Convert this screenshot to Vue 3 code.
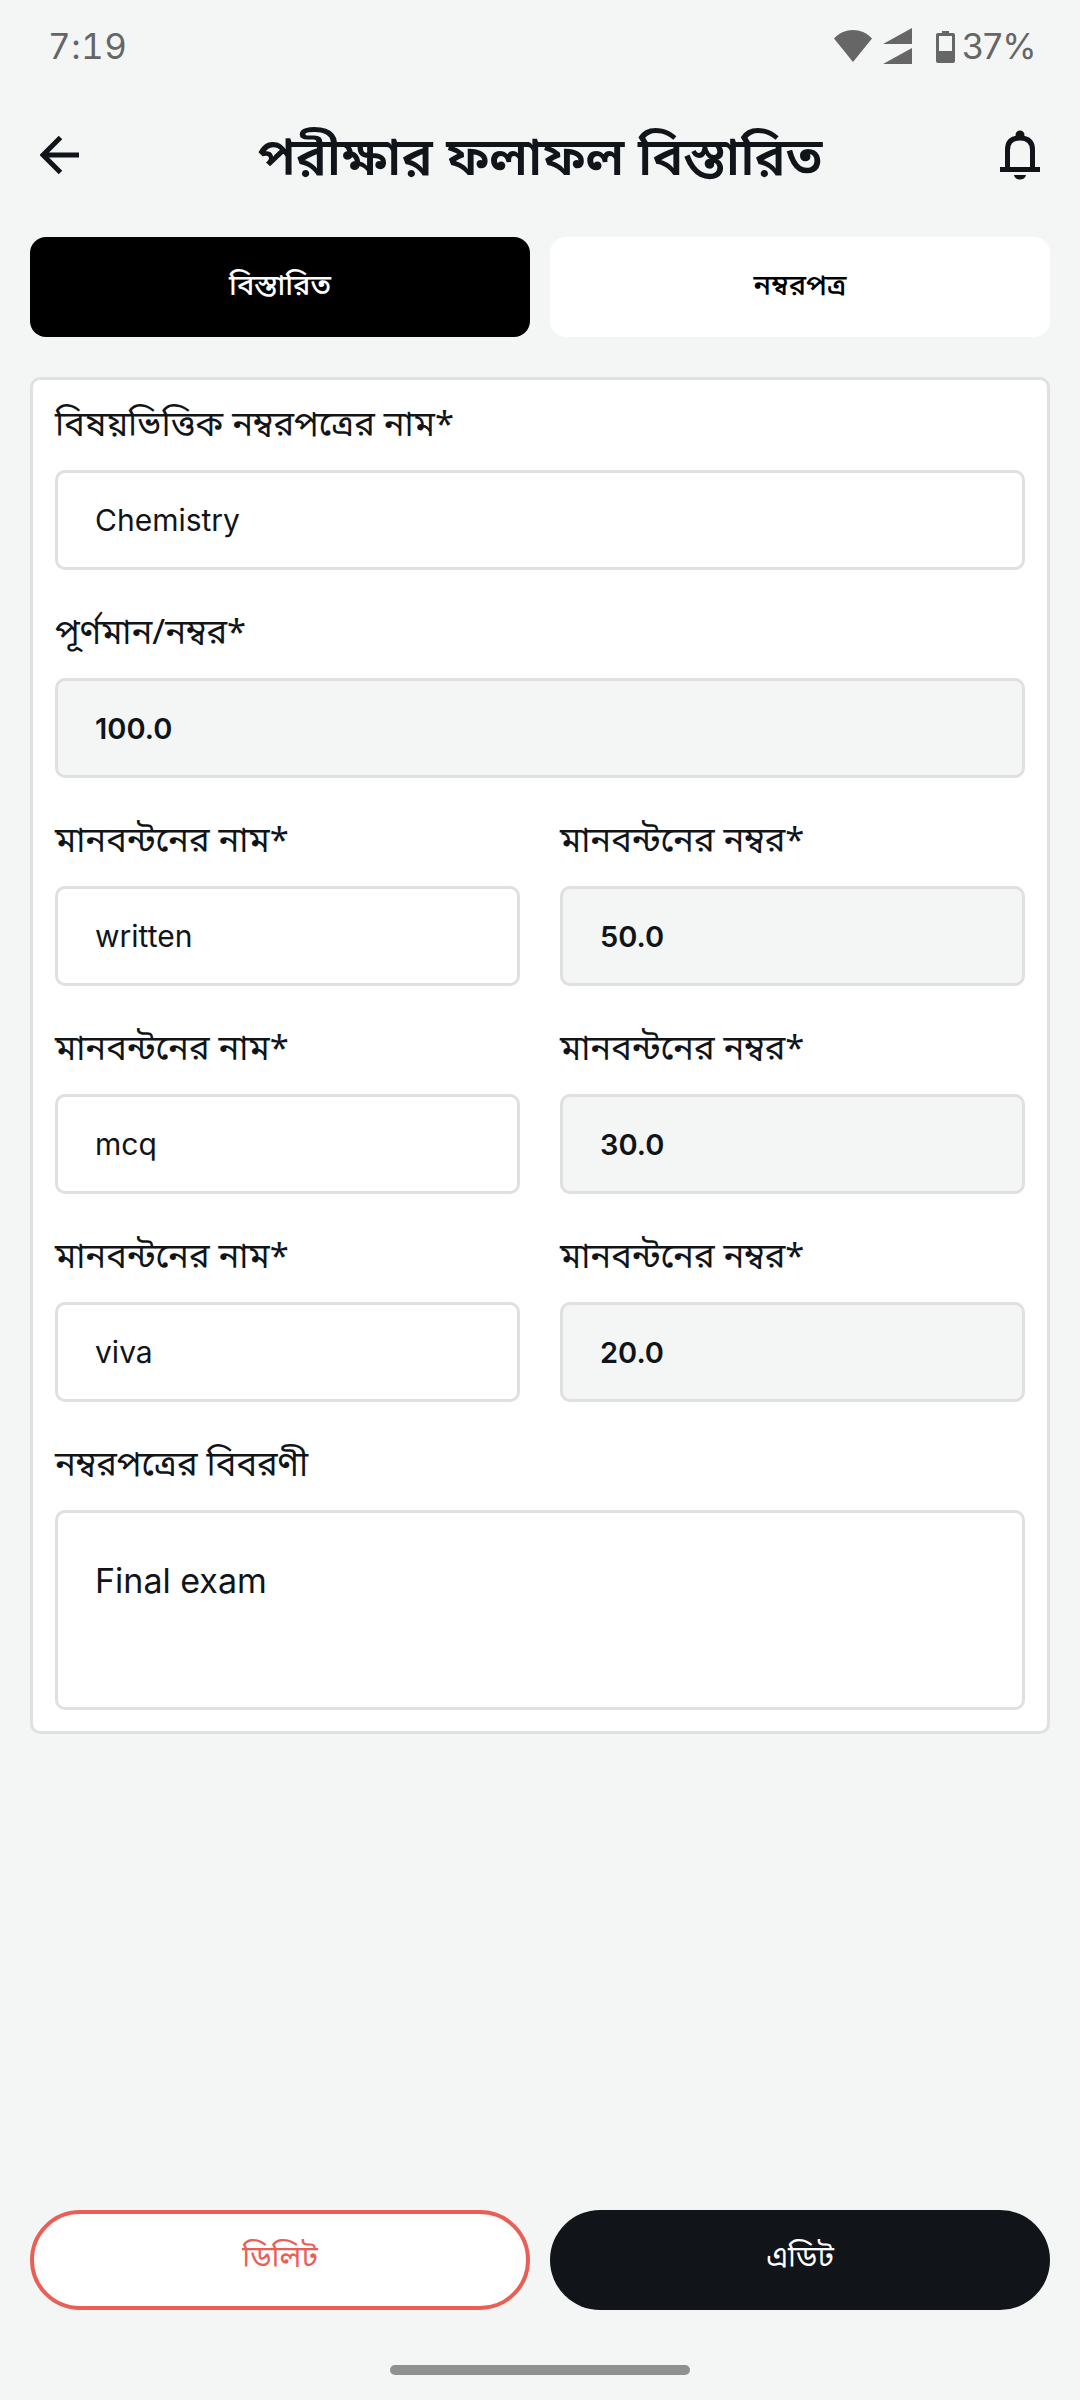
<script setup>
const rows = [
  { name: 'written', mark: '50.0' },
  { name: 'mcq', mark: '30.0' },
  { name: 'viva', mark: '20.0' }
]
</script>

<template>
  <div class="screen">
    <div class="status">
      <span class="time">7:19</span>
      <div class="sys">
        <svg class="wifi" width="38" height="32" viewBox="0 0 38 32"><path d="M0 8.500C10.500-2.800 27.500-2.800 38 8.500L19 32Z" fill="#666"/></svg>
        <svg class="signal" width="29" height="36" viewBox="0 0 29 36"><path d="M29 0V16H0ZM29 20V36H0Z" fill="#666"/></svg>
        <svg class="battery" width="19" height="32" viewBox="0 0 19 32"><path fill-rule="evenodd" d="M6 0H13V2H17Q19 2 19 4V30Q19 32 17 32H2Q0 32 0 30V4Q0 2 2 2H6ZM3 5V20H16V5Z" fill="#666"/></svg>
        <span class="pct">37%</span>
      </div>
    </div>

    <header class="head">
      <svg class="back" width="40" height="40" viewBox="0 0 40 40"><path d="M39 20H4M20.500 2.500 3 20 20.500 37.500" fill="none" stroke="#111418" stroke-width="5"/></svg>
      <h1>পরীক্ষার ফলাফল বিস্তারিত</h1>
      <svg class="bell" width="40" height="50" viewBox="0 0 40 50"><path d="M7.500 38V20C7.500 12 12 8 20 8S32.500 12 32.500 20V38" fill="none" stroke="#111418" stroke-width="5"/><circle cx="20" cy="5" r="4.500" fill="#111418"/><path d="M0 37H40V42H0ZM14 45H26C25 51 15 51 14 45Z" fill="#111418"/></svg>
    </header>

    <div class="tabs">
      <div class="tab active"><span>বিস্তারিত</span></div>
      <div class="tab"><span>নম্বরপত্র</span></div>
    </div>

    <section class="card">
      <label>বিষয়ভিত্তিক নম্বরপত্রের নাম*</label>
      <div class="field">Chemistry</div>
      <label>পূর্ণমান/নম্বর*</label>
      <div class="field ro">100.0</div>
      <div v-for="r in rows" :key="r.name" class="two">
        <div>
          <label>মানবন্টনের নাম*</label>
          <div class="field">{{ r.name }}</div>
        </div>
        <div>
          <label>মানবন্টনের নম্বর*</label>
          <div class="field ro">{{ r.mark }}</div>
        </div>
      </div>
      <label>নম্বরপত্রের বিবরণী</label>
      <div class="field area">Final exam</div>
    </section>

    <div class="actions">
      <button class="btn del"><span>ডিলিট</span></button>
      <button class="btn edit"><span>এডিট</span></button>
    </div>
    <div class="home"></div>
  </div>
</template>

<style>
body { background: #f4f6f6; }
</style>

<style scoped>
.screen {
  width: 1080px;
  height: 2400px;
  box-sizing: border-box;
  display: flex;
  flex-direction: column;
  background: #f4f6f6;
  font-family: "Noto Sans", "Noto Sans Bengali", "Lohit Bengali", "Inter", sans-serif;
  color: #111418;
  overflow: hidden;
}
.status {
  height: 92px;
  box-sizing: border-box;
  padding: 28px 44px 0 48px;
  display: flex;
  justify-content: space-between;
  align-items: flex-start;
  color: #666;
  font-family: "Inter", sans-serif;
  font-size: 35px;
  line-height: 36px;
}
.time { font-variant-numeric: tabular-nums; letter-spacing: 0.500px; }
.sys { display: flex; align-items: flex-start; }
.wifi { margin-top: 2px; }
.signal { margin-left: 11px; }
.battery { margin-left: 24px; margin-top: 3px; }
.pct { margin-left: 7px; letter-spacing: -0.500px; }
.head {
  height: 126px;
  padding: 0 40px;
  display: flex;
  align-items: center;
  justify-content: space-between;
  box-sizing: border-box;
}
.head h1 {
  margin: 0;
  font-size: 52px;
  line-height: 60px;
  font-weight: 600;
}
.back, .bell { flex: none; }
.tabs, .actions {
  display: grid;
  grid-template-columns: 1fr 1fr;
  gap: 20px;
  padding: 0 30px;
}
.tabs { margin-top: 19px; }
.tab {
  height: 100px;
  border-radius: 16px;
  background: #fff;
  display: flex;
  align-items: center;
  justify-content: center;
  font-size: 29px;
  font-weight: 500;
  color: #000;
}
.tab span { margin-bottom: 3px; }
.tab.active { background: #000; color: #fff; }
.card {
  margin: 40px 30px 0;
  height: 1357px;
  box-sizing: border-box;
  padding: 0 22px;
  background: #fff;
  border: 3px solid #e0e0e0;
  border-radius: 10px;
}
label {
  display: block;
  height: 50px;
  margin: 36px 0 22px;
  font-size: 34.600px;
  line-height: 50px;
  color: #111418;
}
.card > label:first-child { margin-top: 18px; }
.field {
  height: 100px;
  box-sizing: border-box;
  padding: 0 37px;
  display: flex;
  align-items: center;
  border: 3px solid #e0e0e0;
  border-radius: 10px;
  background: #fff;
  font-family: "Inter", sans-serif;
  font-size: 30px;
  color: #111418;
}
.ro { background: #f4f6f6; font-weight: 600; font-size: 29px; }
.two {
  display: grid;
  grid-template-columns: 465px 465px;
  gap: 40px;
}
.area {
  height: 200px;
  align-items: flex-start;
  padding-top: 46px;
  font-size: 34px;
  line-height: 44px;
}
.actions { margin-top: auto; }
.btn {
  height: 100px;
  border-radius: 50px;
  font-family: inherit;
  font-size: 30px;
  padding: 0;
  box-sizing: border-box;
}
.btn span { position: relative; top: -3px; }
.del { background: #fff; border: 4px solid #eb5e55; color: #eb5e55; }
.edit { background: #111418; border: none; color: #fff; }
.home {
  width: 300px;
  height: 10px;
  margin: 55px auto 25px;
  border-radius: 5px;
  background: #909090;
}
</style>
